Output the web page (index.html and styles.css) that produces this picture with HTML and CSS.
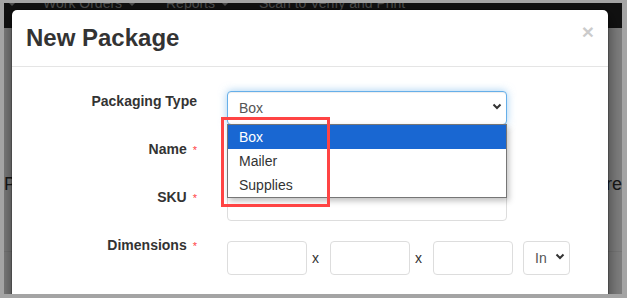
FILE: index.html
```html
<!DOCTYPE html>
<html lang="en">
<head>
<meta charset="utf-8">
<title>New Package</title>
<link rel="stylesheet" href="styles.css">
</head>
<body>
<div class="frame">
  <div class="page">
    <nav class="navbar">
      <span class="nav-item nav-first"><span class="caret"></span></span>
      <span class="nav-item nav-work">Work Orders <span class="caret"></span></span>
      <span class="nav-item nav-gap">Reports <span class="caret"></span></span>
      <span class="nav-item nav-gap">Scan to Verify and Print</span>
    </nav>
    <div class="content">
      <div class="intro"><span>Packages</span><span>Here are</span></div>
      <hr class="rule">
    </div>
    <div class="backdrop"></div>

    <div class="modal">
      <div class="modal-header">
        <h4 class="modal-title">New Package</h4>
        <span class="close">×</span>
      </div>
      <div class="modal-body">
        <div class="form-row">
          <label class="form-label">Packaging Type</label>
          <div class="field">
            <div class="control select focus">
              <span>Box</span>
              <svg class="chevron" width="10" height="7" viewBox="0 0 10 7"><polyline points="1.5,1.5 5,5 8.5,1.5" fill="none" stroke="#333" stroke-width="2"/></svg>
            </div>
            <div class="dropdown">
              <div class="option selected">Box</div>
              <div class="option">Mailer</div>
              <div class="option">Supplies</div>
            </div>
            <div class="callout"></div>
          </div>
        </div>
        <div class="form-row">
          <label class="form-label">Name<span class="req">*</span></label>
          <div class="field"><div class="control"></div></div>
        </div>
        <div class="form-row">
          <label class="form-label">SKU<span class="req">*</span></label>
          <div class="field"><div class="control"></div></div>
        </div>
        <div class="form-row">
          <label class="form-label">Dimensions<span class="req">*</span></label>
          <div class="field dims">
            <div class="control dim"></div>
            <span class="times">x</span>
            <div class="control dim"></div>
            <span class="times">x</span>
            <div class="control dim"></div>
            <div class="control select unit">
              <span>In</span>
              <svg class="chevron" width="10" height="7" viewBox="0 0 10 7"><polyline points="1.5,1.5 5,5 8.5,1.5" fill="none" stroke="#333" stroke-width="2"/></svg>
            </div>
          </div>
        </div>
      </div>
    </div>
  </div>
</div>
</body>
</html>
```
FILE: styles.css
```css
* { box-sizing: border-box; }
html, body { margin: 0; padding: 0; }
body { font-family: "Liberation Sans", Arial, sans-serif; }

.frame {
  width: 627px;
  height: 298px;
  padding: 3px 5px 4px 4px;
  background: #a4a4a4;
}
.page {
  position: relative;
  width: 100%;
  height: 100%;
  overflow: hidden;
  background: #fff;
}

/* background page */
.navbar {
  height: 25px;
  background: #222;
  display: flex;
  align-items: flex-start;
  font-size: 14px;
  line-height: 20px;
  color: #9d9d9d;
  white-space: nowrap;
}
.nav-item { margin-top: -10px; }
.nav-first { margin-left: 2px; }
.nav-work { margin-left: 27px; }
.nav-gap { margin-left: 30px; }
.caret {
  display: inline-block;
  width: 0;
  height: 0;
  margin-left: 2px;
  vertical-align: middle;
  border-top: 4px solid #9d9d9d;
  border-left: 4px solid transparent;
  border-right: 4px solid transparent;
}
.content { padding: 0; }
.intro {
  margin-top: 146px;
  display: flex;
  justify-content: space-between;
  font-size: 18px;
  line-height: 20px;
  color: #333;
}
.rule {
  margin: 57px 0 0;
  border: 0;
  border-top: 1px solid #eee;
}
.backdrop {
  position: absolute;
  inset: 0;
  background: rgba(0, 0, 0, 0.5);
}

/* modal */
.modal {
  position: absolute;
  left: 7px;
  top: 6px;
  width: 598px;
  height: 320px;
  background: #fff;
  background-clip: padding-box;
  border: 1px solid rgba(0, 0, 0, 0.2);
  border-radius: 6px;
  box-shadow: 0 5px 15px rgba(0, 0, 0, 0.5);
}
.modal-header {
  display: flex;
  justify-content: space-between;
  align-items: flex-start;
  padding: 15px 14px 15px 14px;
  border-bottom: 1px solid #e5e5e5;
}
.modal-title {
  margin: 0;
  font-size: 24px;
  line-height: 26px;
  font-weight: bold;
  color: #333;
}
.close {
  margin-top: -3px;
  font-size: 21px;
  line-height: 20px;
  font-weight: bold;
  color: #000;
  opacity: 0.2;
}
.modal-body {
  padding: 24px 0 20px 0;
}
.form-row {
  display: grid;
  grid-template-columns: 185px 1fr;
  column-gap: 30px;
  margin-bottom: 14px;
}
.form-label {
  text-align: right;
  font-size: 14px;
  line-height: 20px;
  font-weight: bold;
  color: #333;
}
.req {
  margin-left: 6px;
  font-size: 11px;
  font-weight: normal;
  color: #f44;
}
.field { position: relative; }
.control {
  width: 280px;
  height: 34px;
  border: 1px solid #ddd;
  border-radius: 4px;
  background: #fff;
}
.select {
  display: flex;
  align-items: center;
  justify-content: space-between;
  padding: 0 4px 0 11px;
  font-size: 14px;
  color: #555;
}
.chevron { display: block; margin-top: -3px; }
.focus {
  border-color: #66afe9;
  box-shadow: inset 0 1px 1px rgba(0, 0, 0, 0.075), 0 0 8px rgba(102, 175, 233, 0.6);
}

/* open native list */
.dropdown {
  position: absolute;
  left: 0;
  top: 33px;
  width: 280px;
  background: #fff;
  border: 1px solid #767676;
  box-shadow: 2px 3px 6px rgba(0, 0, 0, 0.25);
  z-index: 2;
}
.option {
  height: 24px;
  line-height: 24px;
  padding-left: 11px;
  font-size: 14px;
  color: #333;
}
.option.selected {
  background: #1967d2;
  color: #fff;
}
.callout {
  position: absolute;
  left: -6px;
  top: 26px;
  width: 109px;
  height: 90px;
  border: 3px solid #f44;
  z-index: 3;
}

/* dimensions */
.dims {
  display: flex;
  align-items: center;
  margin-top: 6px;
}
.dim { width: 80px; }
.times {
  margin: 0 11px 0 5px;
  font-size: 14px;
  color: #333;
}
.unit {
  width: 47px;
  margin-left: 10px;
}
```
